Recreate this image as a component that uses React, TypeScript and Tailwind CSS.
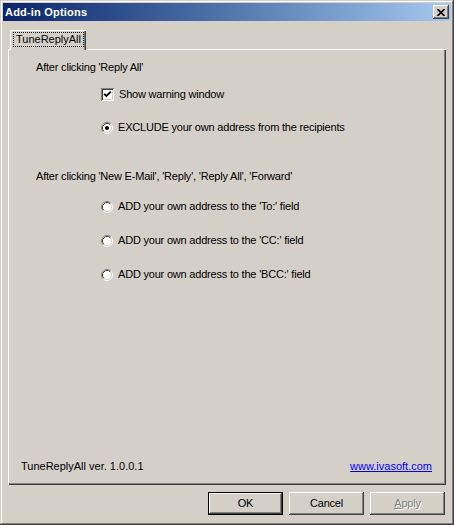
import type { ReactNode } from "react";

const FONT = "font-['Liberation_Sans',Arial,sans-serif]";

function Checkbox({ checked }: { checked?: boolean }) {
  return (
    <div className="w-[13px] h-[13px] bg-white shadow-[inset_1px_1px_#808080,inset_-1px_-1px_#ffffff,inset_2px_2px_#404040,inset_-2px_-2px_#d4d0c8] flex items-center justify-center">
      {checked && (
        <svg width="9" height="9" viewBox="0 0 9 9">
          <polyline points="1.2,3.8 3.4,6 7.8,1.6" fill="none" stroke="#000" strokeWidth="1.9" />
        </svg>
      )}
    </div>
  );
}

function Radio({ checked }: { checked?: boolean }) {
  return (
    <svg width="12" height="12" viewBox="0 0 12 12" className="shrink-0">
      <circle cx="6" cy="6" r="5" fill="#fff" />
      <path d="M2.11 9.89 A5.5 5.5 0 0 1 9.89 2.11" fill="none" stroke="#808080" />
      <path d="M9.89 2.11 A5.5 5.5 0 0 1 2.11 9.89" fill="none" stroke="#fff" />
      <path d="M2.82 9.18 A4.5 4.5 0 0 1 9.18 2.82" fill="none" stroke="#404040" />
      <path d="M9.18 2.82 A4.5 4.5 0 0 1 2.82 9.18" fill="none" stroke="#d4d0c8" />
      {checked && <circle cx="6" cy="6" r="2" fill="#000" />}
    </svg>
  );
}

function Option({ children, className }: { children: ReactNode; className: string }) {
  return (
    <div className={`flex items-center gap-[5px] ml-[65px] h-[13px] ${className}`}>{children}</div>
  );
}

function Button({ children, primary }: { children: ReactNode; primary?: boolean }) {
  return (
    <div
      className={`w-[75px] h-[23px] flex items-center justify-center ${
        primary
          ? "border border-black shadow-[inset_-1px_-1px_#404040,inset_1px_1px_#ffffff,inset_-2px_-2px_#808080]"
          : "shadow-[inset_-1px_-1px_#404040,inset_1px_1px_#ffffff,inset_-2px_-2px_#808080,inset_2px_2px_#d4d0c8]"
      }`}
    >
      {children}
    </div>
  );
}

export default function App() {
  return (
    <div
      className={`${FONT} text-[11px] leading-[13px] tracking-[-0.2px] text-black w-[454px] h-[525px] bg-[#d4d0c8] p-[3px] flex flex-col shadow-[inset_-1px_-1px_#404040,inset_1px_1px_#d4d0c8,inset_-2px_-2px_#808080,inset_2px_2px_#ffffff]`}
    >
      {/* title bar */}
      <div className="h-[18px] shrink-0 bg-linear-to-r from-[#0a246a] to-[#a6caf0] flex items-center justify-between pl-[2px] pr-[2px]">
        <span className="text-white font-bold tracking-[0.2px]">Add-in Options</span>
        <div className="w-[16px] h-[14px] bg-[#d4d0c8] flex items-center justify-center shadow-[inset_-1px_-1px_#404040,inset_1px_1px_#ffffff,inset_-2px_-2px_#808080]">
          <svg width="8" height="7" viewBox="0 0 8 7">
            <path d="M0.5 0 L7.5 7 M7.5 0 L0.5 7" stroke="#000" strokeWidth="1.6" />
          </svg>
        </div>
      </div>

      {/* tabs */}
      <div className="mt-[9px] mx-[5px] flex flex-col">
        <div className="flex pl-[2px]">
          <div className="relative z-10 -mb-px h-[20px] w-[76px] bg-[#d4d0c8] border-l border-t border-white shadow-[inset_-1px_0_#404040,inset_-2px_0_#808080] rounded-tl-[2px] flex justify-center pt-[1px]">
            <span className="h-[15px] px-[2px] leading-[13px] tracking-normal border border-dotted border-black">TuneReplyAll</span>
          </div>
        </div>

        {/* panel */}
        <div className="h-[436px] flex flex-col shadow-[inset_1px_1px_#ffffff,inset_-1px_-1px_#404040,inset_-2px_-2px_#808080]">
          <div className="flex flex-col pl-[28px] pt-[12px]">
            <div>After clicking 'Reply All'</div>
            <Option className="mt-[14px]">
              <Checkbox checked />
              <span>Show warning window</span>
            </Option>
            <Option className="mt-[20px]">
              <Radio checked />
              <span>EXCLUDE your own address from the recipients</span>
            </Option>

            <div className="mt-[36px]">After clicking 'New E-Mail', 'Reply', 'Reply All', 'Forward'</div>
            <Option className="mt-[17px]">
              <Radio />
              <span>ADD your own address to the 'To:' field</span>
            </Option>
            <Option className="mt-[21px]">
              <Radio />
              <span>ADD your own address to the 'CC:' field</span>
            </Option>
            <Option className="mt-[21px]">
              <Radio />
              <span>ADD your own address to the 'BCC:' field</span>
            </Option>
          </div>

          <div className="mt-auto flex justify-between pl-[13px] pr-[14px] pb-[12px] tracking-normal">
            <span>TuneReplyAll ver. 1.0.0.1</span>
            <span className="text-[#0000ff] underline">www.ivasoft.com</span>
          </div>
        </div>
      </div>

      {/* buttons */}
      <div className="mt-[7px] mr-[6px] flex justify-end gap-[6px]">
        <Button primary>OK</Button>
        <Button>Cancel</Button>
        <Button>
          <span className="text-[#808080] [text-shadow:1px_1px_0_#ffffff]">
            <span className="underline">A</span>pply
          </span>
        </Button>
      </div>
    </div>
  );
}
